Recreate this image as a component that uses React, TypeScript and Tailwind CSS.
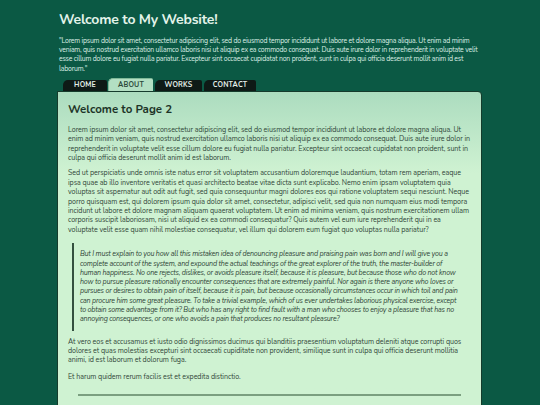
import React from "react";

const font = { fontFamily: "Nunito, Lato, 'Open Sans', sans-serif" };

export default function App() {
  const tabs = ["HOME", "ABOUT", "WORKS", "CONTACT"];
  return (
    <div className="min-h-screen w-full bg-[#0b5944] overflow-hidden" style={font}>
      <div className="pl-[57px] pr-[58px] pt-[9px]">
        <h1 className="ml-[2px] text-[14px] leading-[22px] font-bold tracking-[-0.2px] text-[#e3f4ea]">Welcome to My Website!</h1>
        <p className="ml-[2px] mt-[5px] w-[423px] text-[6.9px] leading-[9.2px] tracking-[-0.2px] text-[#dcefe5]">
          "Lorem ipsum dolor sit amet, consectetur adipiscing elit, sed do eiusmod tempor incididunt ut labore et dolore magna aliqua. Ut enim ad minim veniam, quis nostrud exercitation ullamco laboris nisi ut aliquip ex ea commodo consequat. Duis aute irure dolor in reprehenderit in voluptate velit esse cillum dolore eu fugiat nulla pariatur. Excepteur sint occaecat cupidatat non proident, sunt in culpa qui officia deserunt mollit anim id est laborum."
        </p>
        <nav className="mt-[5px] ml-[6px] flex items-end gap-[1px] h-[13px]">
          {tabs.map((t) =>
            t === "ABOUT" ? (
              <div key={t} className="h-[13px] w-[45px] flex items-center justify-center rounded-tl-[5px] rounded-tr-[2px] bg-[#b3dfc3] border-t border-l border-[#7fb898] text-[7px] font-bold text-[#2c4a3a] tracking-[0.2px]">
                {t}
              </div>
            ) : (
              <div key={t} className={`h-[11px] ${t === "HOME" ? "w-[44px]" : t === "WORKS" ? "w-[47px] ml-[1px]" : "w-[52px] ml-[1px]"} flex items-center justify-center rounded-tl-[5px] rounded-tr-[2px] bg-[#0e1a16] text-[7px] font-bold text-[#e4f0ea] tracking-[0.2px]`}>
                {t}
              </div>
            )
          )}
        </nav>
        <main className="w-[425px] border border-[#153b2c] rounded-tr-[4px] bg-gradient-to-b from-[#acdcbf] to-[#cff2d2] to-[25%] pl-[10px] pr-[10px] pt-[9px] pb-[20px] text-[#2f4638]">
          <h2 className="text-[11.5px] leading-[16px] font-bold text-[#1d3428]">Welcome to Page 2</h2>
          <p className="mt-[9px] text-[7.1px] leading-[9.4px] tracking-[-0.06px]">
            Lorem ipsum dolor sit amet, consectetur adipiscing elit, sed do eiusmod tempor incididunt ut labore et dolore magna aliqua. Ut enim ad minim veniam, quis nostrud exercitation ullamco laboris nisi ut aliquip ex ea commodo consequat. Duis aute irure dolor in reprehenderit in voluptate velit esse cillum dolore eu fugiat nulla pariatur. Excepteur sint occaecat cupidatat non proident, sunt in culpa qui officia deserunt mollit anim id est laborum.
          </p>
          <p className="mt-[6px] text-[7.1px] leading-[9.4px] tracking-[-0.06px]">
            Sed ut perspiciatis unde omnis iste natus error sit voluptatem accusantium doloremque laudantium, totam rem aperiam, eaque ipsa quae ab illo inventore veritatis et quasi architecto beatae vitae dicta sunt explicabo. Nemo enim ipsam voluptatem quia voluptas sit aspernatur aut odit aut fugit, sed quia consequuntur magni dolores eos qui ratione voluptatem sequi nesciunt. Neque porro quisquam est, qui dolorem ipsum quia dolor sit amet, consectetur, adipisci velit, sed quia non numquam eius modi tempora incidunt ut labore et dolore magnam aliquam quaerat voluptatem. Ut enim ad minima veniam, quis nostrum exercitationem ullam corporis suscipit laboriosam, nisi ut aliquid ex ea commodi consequatur? Quis autem vel eum iure reprehenderit qui in ea voluptate velit esse quam nihil molestiae consequatur, vel illum qui dolorem eum fugiat quo voluptas nulla pariatur?
          </p>
          <blockquote className="mt-[8px] ml-[4px] mr-[10px] border-l-2 border-[#34503f] pl-[6px] pt-[7px] pb-[6px] italic text-[7.1px] leading-[9.3px] tracking-[-0.2px]">
            But I must explain to you how all this mistaken idea of denouncing pleasure and praising pain was born and I will give you a complete account of the system, and expound the actual teachings of the great explorer of the truth, the master-builder of human happiness. No one rejects, dislikes, or avoids pleasure itself, because it is pleasure, but because those who do not know how to pursue pleasure rationally encounter consequences that are extremely painful. Nor again is there anyone who loves or pursues or desires to obtain pain of itself, because it is pain, but because occasionally circumstances occur in which toil and pain can procure him some great pleasure. To take a trivial example, which of us ever undertakes laborious physical exercise, except to obtain some advantage from it? But who has any right to find fault with a man who chooses to enjoy a pleasure that has no annoying consequences, or one who avoids a pain that produces no resultant pleasure?
          </blockquote>
          <p className="mt-[7px] text-[7.1px] leading-[9.4px] tracking-[-0.06px]">
            At vero eos et accusamus et iusto odio dignissimos ducimus qui blanditiis praesentium voluptatum deleniti atque corrupti quos dolores et quas molestias excepturi sint occaecati cupiditate non provident, similique sunt in culpa qui officia deserunt mollitia animi, id est laborum et dolorum fuga.
          </p>
          <p className="mt-[7px] text-[7.1px] leading-[9.4px] tracking-[-0.06px]">Et harum quidem rerum facilis est et expedita distinctio.</p>
          <hr className="mt-[12px] mx-[10px] border-0 h-[2px] bg-[#7b9f80]" />
        </main>
      </div>
    </div>
  );
}
